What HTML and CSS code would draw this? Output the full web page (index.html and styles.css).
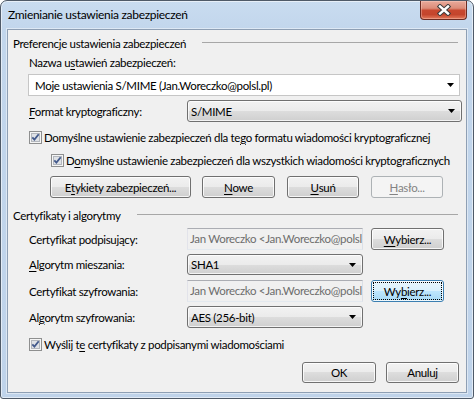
FILE: index.html
```html
<!DOCTYPE html>
<html lang="pl">
<head>
<meta charset="utf-8">
<title>Zmienianie ustawienia zabezpieczeń</title>
<link rel="stylesheet" href="styles.css">
</head>
<body>
<div class="window">
  <div class="titlebar">
    <span class="title">Zmienianie ustawienia zabezpieczeń</span>
    <div class="close">
      <svg width="14" height="12" viewBox="0 0 14 12">
        <path d="M3 2.5 L11 9.5 M11 2.5 L3 9.5" stroke="#3b3b3b" stroke-width="4.4" stroke-linecap="square" fill="none"/>
        <path d="M3 2.5 L11 9.5 M11 2.5 L3 9.5" stroke="#ffffff" stroke-width="2.4" stroke-linecap="square" fill="none"/>
      </svg>
    </div>
  </div>
  <div class="client">
    <div class="group-head g1"><span>Preferencje ustawienia zabezpieczeń</span><span class="rule"></span></div>
    <div class="label-line nazwa">Nazwa u<u>s</u>tawień zabezpieczeń:</div>
    <div class="combo combo-white wide">
      <span class="combo-text">Moje ustawienia S/MIME (Jan.Woreczko@polsl.pl)</span>
      <svg class="arrow" width="7" height="4" viewBox="0 0 7 4"><polygon points="0,0 7,0 3.5,4" fill="#000"/></svg>
    </div>
    <div class="field-row format-row">
      <span class="label"><u>F</u>ormat kryptograficzny:</span>
      <div class="combo format-combo">
        <span class="combo-text">S/MIME</span>
        <svg class="arrow" width="7" height="4" viewBox="0 0 7 4"><polygon points="0,0 7,0 3.5,4" fill="#000"/></svg>
      </div>
    </div>
    <div class="check-row cb1">
      <svg class="checkbox" width="13" height="13" viewBox="0 0 13 13"><rect x="0.5" y="0.5" width="12" height="12" fill="#f5f5f5" stroke="#8e8f8f"/><rect x="2.5" y="2.5" width="8" height="8" fill="#dfe2e6" stroke="#b3b7bd"/><path d="M3.3 6.3 L5.4 8.6 L9.7 3.2" fill="none" stroke="#435a8c" stroke-width="1.8"/></svg>
      <span>Domyślne ustawienie zabezpieczeń dla te<u>g</u>o formatu wiadomości kryptograficznej</span>
    </div>
    <div class="check-row cb2">
      <svg class="checkbox" width="13" height="13" viewBox="0 0 13 13"><rect x="0.5" y="0.5" width="12" height="12" fill="#f5f5f5" stroke="#8e8f8f"/><rect x="2.5" y="2.5" width="8" height="8" fill="#dfe2e6" stroke="#b3b7bd"/><path d="M3.3 6.3 L5.4 8.6 L9.7 3.2" fill="none" stroke="#435a8c" stroke-width="1.8"/></svg>
      <span>D<u>o</u>myślne ustawienie zabezpieczeń dla wszystkich wiadomości kryptograficznych</span>
    </div>
    <div class="button-row">
      <div class="btn btn-labels">E<u>t</u>ykiety zabezpieczeń...</div>
      <div class="btn btn-new"><u>N</u>owe</div>
      <div class="btn btn-del"><u>U</u>suń</div>
      <div class="btn btn-pass disabled"><u>H</u>asło...</div>
    </div>

    <div class="group-head g2"><span>Certyfikaty i algorytmy</span><span class="rule"></span></div>
    <div class="field-row cert1">
      <span class="label">Certyfikat podpisujący:</span>
      <div class="textbox"><span class="tb-text">Jan Woreczko &lt;Jan.Woreczko@polsl.pl&gt;</span></div>
      <div class="btn btn-choose"><u>W</u>ybierz...</div>
    </div>
    <div class="field-row sha">
      <span class="label"><u>A</u>lgorytm mieszania:</span>
      <div class="combo small-combo">
        <span class="combo-text">SHA1</span>
        <svg class="arrow" width="7" height="4" viewBox="0 0 7 4"><polygon points="0,0 7,0 3.5,4" fill="#000"/></svg>
      </div>
    </div>
    <div class="field-row cert2">
      <span class="label">Certyfikat szyfrowania:</span>
      <div class="textbox"><span class="tb-text">Jan Woreczko &lt;Jan.Woreczko@polsl.pl&gt;</span></div>
      <div class="btn btn-choose focused"><span class="focus-rect">Wy<u>b</u>ierz...</span></div>
    </div>
    <div class="field-row aes">
      <span class="label">Al<u>g</u>orytm szyfrowania:</span>
      <div class="combo small-combo">
        <span class="combo-text">AES (256-bit)</span>
        <svg class="arrow" width="7" height="4" viewBox="0 0 7 4"><polygon points="0,0 7,0 3.5,4" fill="#000"/></svg>
      </div>
    </div>
    <div class="check-row cb3">
      <svg class="checkbox" width="13" height="13" viewBox="0 0 13 13"><rect x="0.5" y="0.5" width="12" height="12" fill="#f5f5f5" stroke="#8e8f8f"/><rect x="2.5" y="2.5" width="8" height="8" fill="#dfe2e6" stroke="#b3b7bd"/><path d="M3.3 6.3 L5.4 8.6 L9.7 3.2" fill="none" stroke="#435a8c" stroke-width="1.8"/></svg>
      <span>Wyślij t<u>e</u> certyfikaty z podpisanymi wiadomościami</span>
    </div>
    <div class="dialog-buttons">
      <div class="btn btn-ok">OK</div>
      <div class="btn btn-cancel">Anuluj</div>
    </div>
  </div>
</div>
</body>
</html>
```

FILE: styles.css
```css
* { box-sizing: border-box; }

html, body {
  margin: 0;
  padding: 0;
  background: #ffffff;
}

body {
  font-family: "Lato", "Liberation Sans", sans-serif;
  font-size: 11.5px;
  letter-spacing: -0.32px;
  color: #000;
}

u { text-decoration: underline; text-underline-offset: 2px; }

.window {
  width: 474px;
  height: 399px;
  border: 1px solid #4f5a68;
  border-radius: 7px 7px 3px 3px;
  background: linear-gradient(to bottom, #c9dcf0 0px, #c2d6ec 28px, #bfd3ea 100%);
  box-shadow: inset 0 0 0 1px rgba(255,255,255,0.55);
  padding: 0 6px 5px 6px;
  display: flex;
  flex-direction: column;
}

.titlebar {
  height: 28px;
  display: flex;
  align-items: flex-start;
}

.title {
  padding-left: 1px;
  line-height: 28px;
  height: 28px;
  font-size: 12px;
  letter-spacing: -0.3px;
}

.close {
  margin-left: auto;
  width: 47px;
  height: 19px;
  border: 1px solid #6b2b22;
  border-top: none;
  border-radius: 0 0 4px 4px;
  background: linear-gradient(to bottom, #e9aa9b 0%, #dc8c79 40%, #c8482f 52%, #c4452c 75%, #e37a5c 100%);
  box-shadow: inset 0 0 0 1px rgba(255,220,210,0.35);
  display: flex;
  align-items: center;
  justify-content: center;
}

.client {
  width: 460px;
  height: 364px;
  border: 1px solid #8e9fb4;
  background: #f0f0f0;
  box-shadow: 0 0 0 1px rgba(255,255,255,0.45);
  display: flex;
  flex-direction: column;
}

/* group headers */
.group-head {
  height: 14px;
  display: flex;
  align-items: center;
  padding-left: 5px;
  line-height: 14px;
  white-space: nowrap;
}
.group-head .rule {
  flex: 1;
  height: 1px;
  background: #a7a7a7;
  margin-left: 16px;
  margin-right: 8px;
  margin-bottom: 4px;
}
.g1 { margin-top: 7px; }
.g2 { margin-top: 11px; }

.label-line {
  height: 14px;
  line-height: 14px;
  padding-left: 21px;
}
.nazwa { margin-top: 5px; }

/* combos */
.combo {
  height: 22px;
  border: 1px solid #707070;
  border-radius: 3px;
  background: linear-gradient(to bottom, #f2f2f2 0%, #ebebeb 50%, #dddddd 50%, #cfcfcf 100%);
  box-shadow: inset 0 0 0 1px rgba(255,255,255,0.75);
  display: flex;
  align-items: center;
  padding-left: 3px;
  padding-right: 6px;
}
.combo-text { flex: 1; white-space: nowrap; overflow: hidden; }
.combo .arrow { flex: none; }

.combo-white {
  background: #ffffff;
  border: 1px solid #c6c6c6;
  border-radius: 0;
  box-shadow: none;
  padding-left: 6px;
  padding-right: 5px;
}
.wide {
  margin-top: 4px;
  margin-left: 20px;
  width: 432px;
}

.field-row {
  display: flex;
  align-items: center;
  padding-left: 21px;
}
.field-row .label {
  width: 158px;
  flex: none;
  white-space: nowrap;
}
.format-row { margin-top: 4px; height: 22px; }
.format-combo { width: 275px; }

.small-combo { width: 176px; }

/* checkboxes */
.check-row {
  height: 14px;
  display: flex;
  align-items: center;
  white-space: nowrap;
}
.check-row .checkbox { flex: none; margin-right: 2px; }
.cb1 { margin-top: 8px; padding-left: 21px; }
.cb2 { margin-top: 9px; padding-left: 43px; }
.cb3 { margin-top: 9px; padding-left: 21px; }

/* buttons */
.btn {
  height: 22px;
  border: 1px solid #707070;
  border-radius: 3px;
  background: linear-gradient(to bottom, #f2f2f2 0%, #ebebeb 50%, #dddddd 50%, #cfcfcf 100%);
  box-shadow: inset 0 0 0 1px rgba(255,255,255,0.8);
  display: flex;
  align-items: center;
  justify-content: center;
  white-space: nowrap;
  flex: none;
}
.btn.disabled {
  border-color: #adb2b5;
  background: #f4f4f4;
  box-shadow: none;
  color: #838383;
}
.btn.focused {
  border-color: #3c7fb1;
  background: linear-gradient(to bottom, #eaf6fd 0%, #d9f0fc 50%, #bee6fd 50%, #a7d9f5 100%);
  padding: 2px;
}
.focus-rect {
  align-self: stretch;
  flex: 1;
  display: flex;
  align-items: center;
  justify-content: center;
  outline: 1px dotted #000;
}

.button-row {
  margin-top: 9px;
  display: flex;
  gap: 12px;
  padding-left: 42px;
}
.btn-labels { width: 141px; margin-right: -1px; }
.btn-new { width: 73px; }
.btn-del { width: 72px; }
.btn-pass { width: 72px; }

/* textboxes */
.textbox {
  width: 176px;
  height: 22px;
  flex: none;
  border: 1px solid #abadb3;
  border-color: #abadb3 #dbdfe6 #e3e9ef #e2e3ea;
  background: #f0f0f0;
  color: #6d6d6d;
  overflow: hidden;
  line-height: 20px;
  padding-left: 2px;
  display: flex;
}
.tb-text {
  flex: 1;
  min-width: 0;
  white-space: nowrap;
  overflow: hidden;
}
.btn-choose { width: 73px; margin-left: 8px; }

.cert1 { margin-top: 5px; height: 22px; }
.sha { margin-top: 4px; height: 21px; }
.sha .combo { height: 21px; }
.cert2 { margin-top: 5px; height: 22px; }
.aes { margin-top: 4px; height: 22px; }

.dialog-buttons {
  margin-top: 11px;
  display: flex;
  justify-content: flex-end;
  gap: 10px;
  padding-right: 7px;
}
.btn-ok { width: 74px; height: 21px; }
.btn-cancel { width: 73px; height: 21px; }
```
